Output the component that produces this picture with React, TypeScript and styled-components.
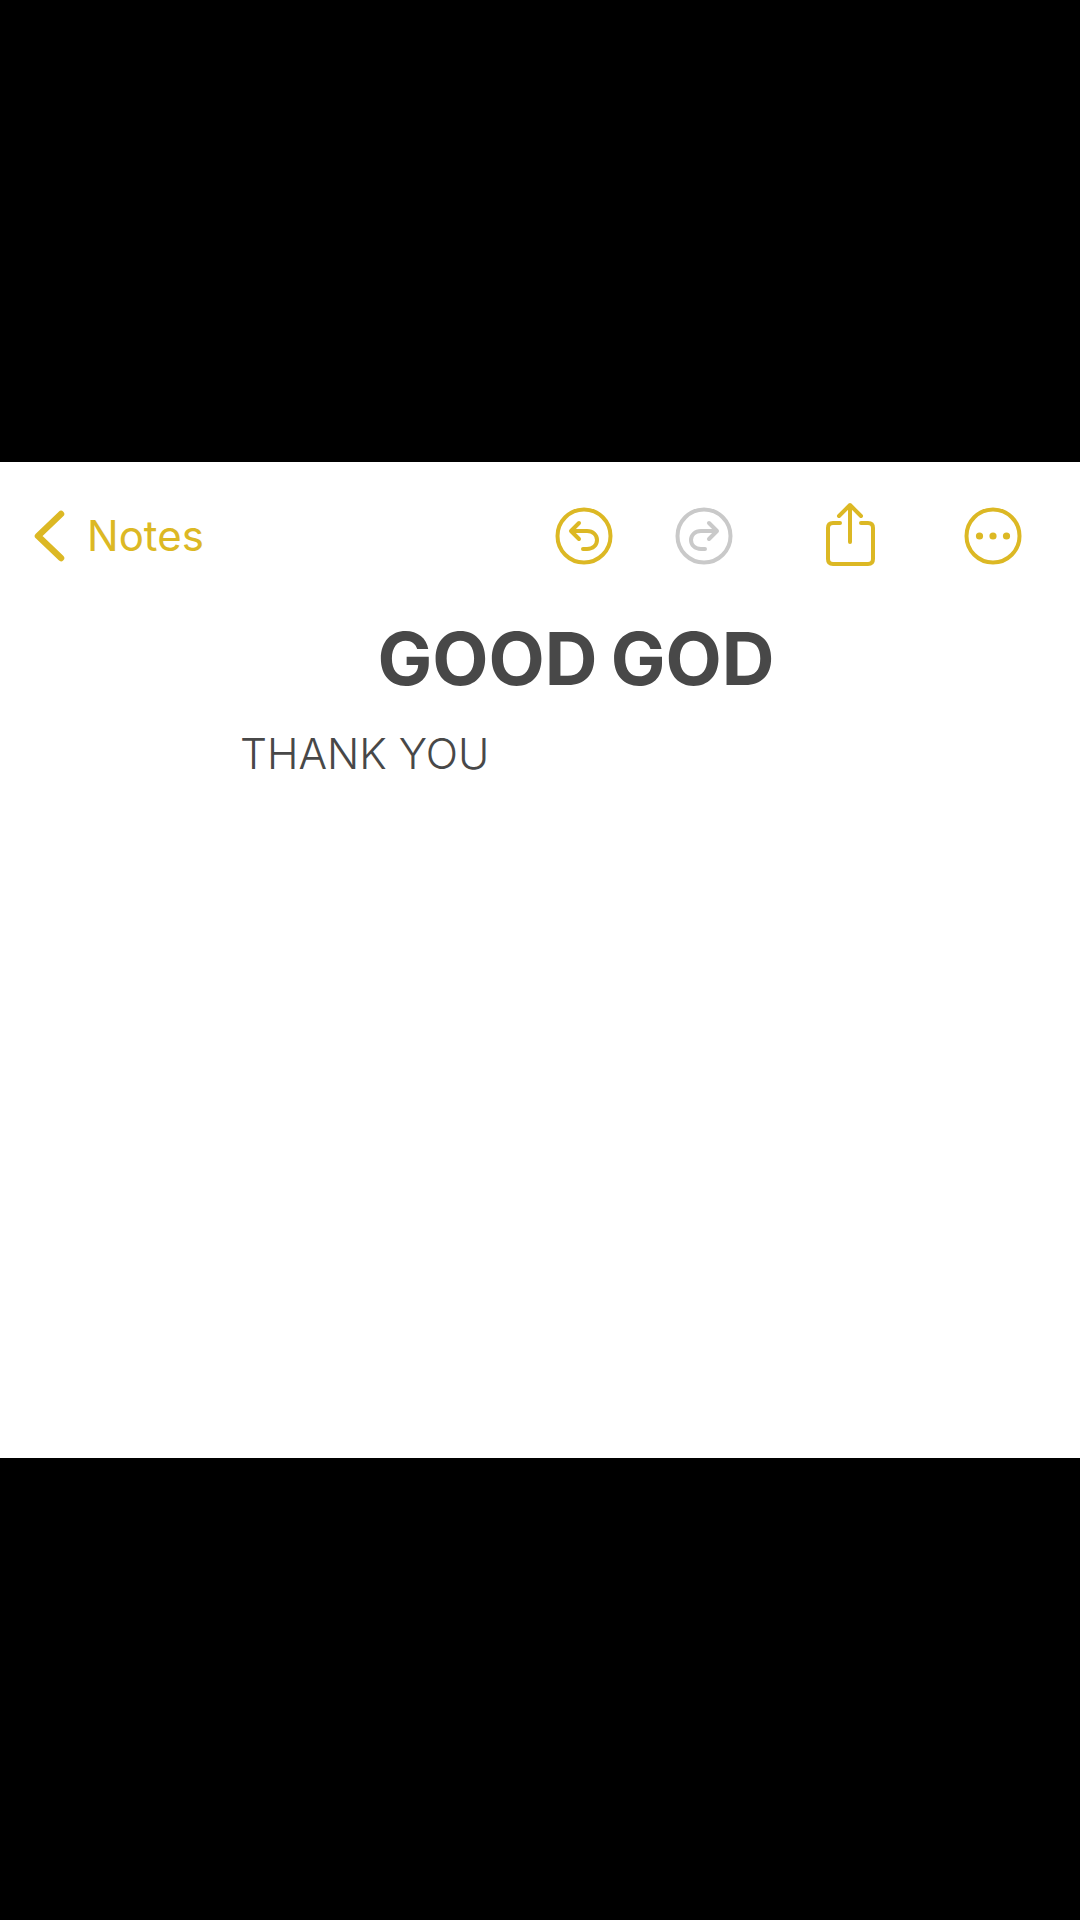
import styled, { createGlobalStyle } from "styled-components";

const YELLOW = "#dcb824";
const GREY = "#c9c9c9";

const GlobalStyle = createGlobalStyle`
  html, body {
    margin: 0;
    background: #000;
  }
`;

export default function App() {
  return (
    <>
      <GlobalStyle />
      <Screen>
        <Sheet>
          <Toolbar>
            <BackLink>
              <svg width="32" height="52" viewBox="0 0 32 52" fill="none">
                <path
                  d="M28 4 L5 26 L28 48"
                  stroke={YELLOW}
                  strokeWidth="6.5"
                  strokeLinecap="round"
                  strokeLinejoin="round"
                />
              </svg>
              <BackLabel>Notes</BackLabel>
            </BackLink>
            <Actions>
              <ActionIcon $offset={0}>
                <svg width="60" height="60" viewBox="0 0 60 60" fill="none" stroke={YELLOW} strokeWidth="4" strokeLinecap="round" strokeLinejoin="round">
                  <circle cx="30" cy="30" r="26.5" />
                  <path d="M25 17 L17 25 L25 33" />
                  <path d="M18 25 H33 C39 25 43 29 43 34 C43 39 39 43 33 43 H29" />
                </svg>
              </ActionIcon>
              <ActionIcon $offset={60}>
                <svg width="60" height="60" viewBox="0 0 60 60" fill="none" stroke={GREY} strokeWidth="4" strokeLinecap="round" strokeLinejoin="round">
                  <circle cx="30" cy="30" r="26.5" />
                  <path d="M35 17 L43 25 L35 33" />
                  <path d="M42 25 H27 C21 25 17 29 17 34 C17 39 21 43 27 43 H31" />
                </svg>
              </ActionIcon>
              <ActionIcon $offset={86}>
                <svg width="60" height="70" viewBox="0 0 60 70" fill="none" stroke={YELLOW} strokeWidth="4" strokeLinecap="round" strokeLinejoin="round">
                  <path d="M20 22 H13 C9.5 22 8 23.5 8 27 V58 C8 61.5 9.5 63 13 63 H48 C51.5 63 53 61.5 53 58 V27 C53 23.5 51.5 22 48 22 H41" />
                  <path d="M30 41 V5" />
                  <path d="M19 15 L30 4 L41 15" />
                </svg>
              </ActionIcon>
              <ActionIcon $offset={83}>
                <svg width="60" height="60" viewBox="0 0 60 60" fill="none" stroke={YELLOW} strokeWidth="4">
                  <circle cx="30" cy="30" r="26.5" />
                  <circle cx="16.5" cy="30" r="3.6" fill={YELLOW} stroke="none" />
                  <circle cx="30" cy="30" r="3.6" fill={YELLOW} stroke="none" />
                  <circle cx="43.5" cy="30" r="3.6" fill={YELLOW} stroke="none" />
                </svg>
              </ActionIcon>
            </Actions>
          </Toolbar>
          <Title>GOOD GOD</Title>
          <Body>THANK YOU</Body>
        </Sheet>
      </Screen>
    </>
  );
}

const Screen = styled.div`
  width: 1080px;
  height: 1920px;
  background: #000;
  padding-top: 462px;
  box-sizing: border-box;
  overflow: hidden;
`;

const Sheet = styled.main`
  height: 996px;
  background: #fff;
  display: flex;
  flex-direction: column;
  font-family: Inter, "Liberation Sans", sans-serif;
`;

const Toolbar = styled.header`
  height: 147px;
  flex: none;
  display: flex;
  align-items: center;
  justify-content: space-between;
  padding: 0 57px 0 33px;
`;

const BackLink = styled.div`
  display: flex;
  align-items: center;
  gap: 22px;
`;

const BackLabel = styled.span`
  color: ${YELLOW};
  font-size: 42px;
  line-height: 52px;
`;

const Actions = styled.div`
  display: flex;
  align-items: center;
`;

const ActionIcon = styled.div<{ $offset: number }>`
  display: flex;
  margin-left: ${(p) => p.$offset}px;
`;

const Title = styled.h1`
  margin: 0;
  padding: 8px 0 0 72px;
  text-align: center;
  color: #484848;
  font-size: 73px;
  line-height: 84px;
  font-weight: 740;
  word-spacing: -4px;
`;

const Body = styled.p`
  margin: 0;
  padding: 25px 0 0 240px;
  color: #484848;
  font-size: 42.5px;
  line-height: 56px;
  font-weight: 350;
`;
